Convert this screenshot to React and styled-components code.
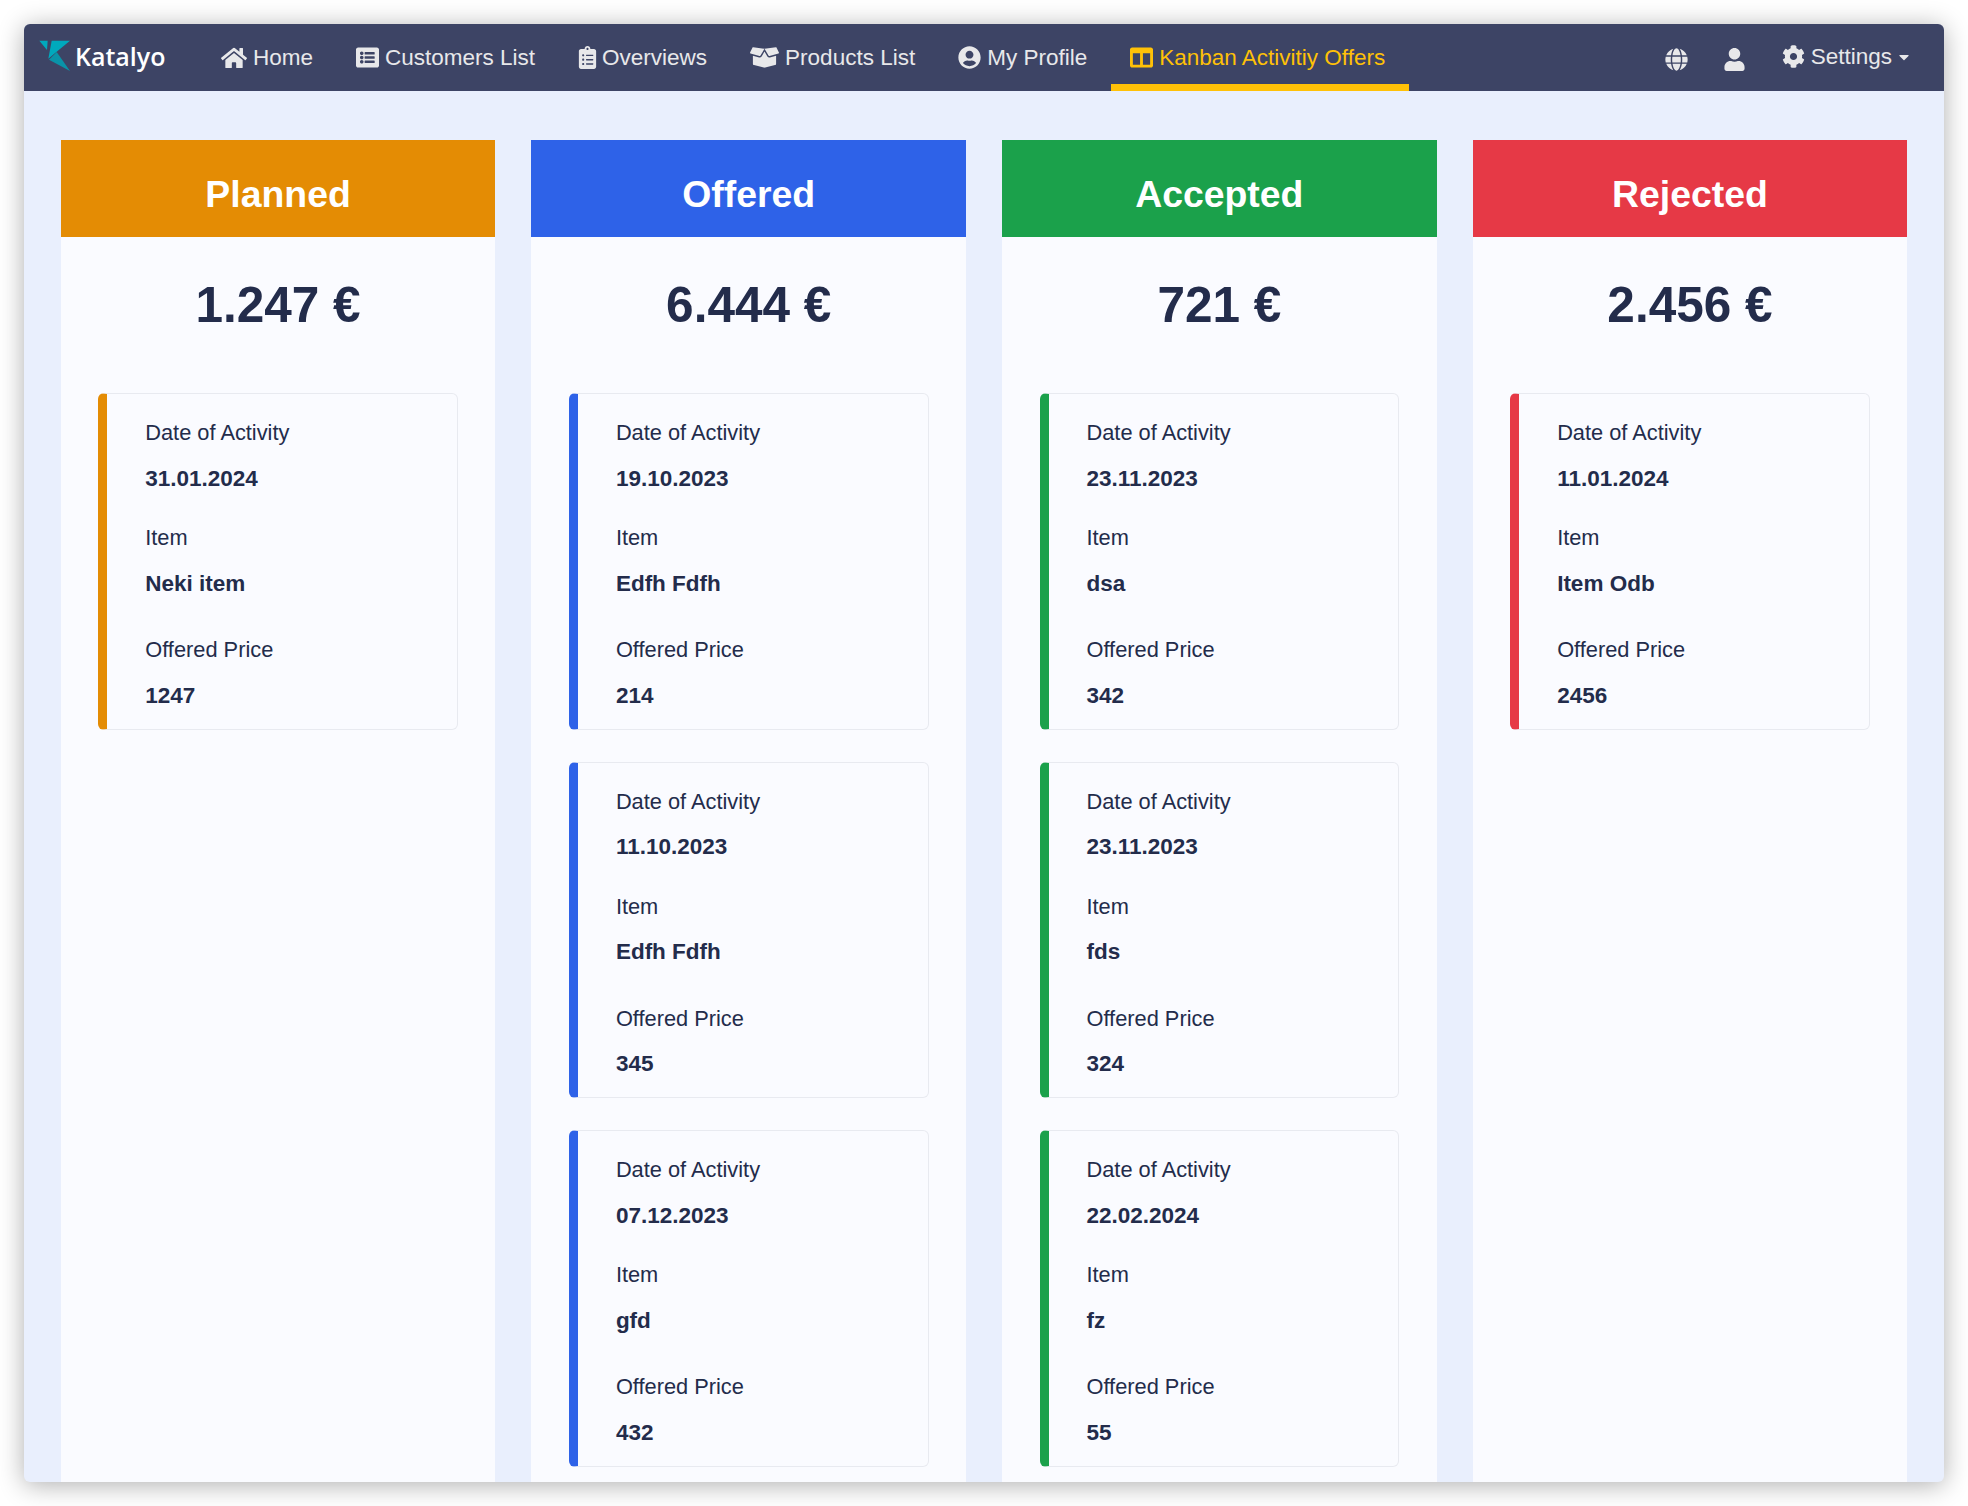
import React from 'react';
import styled, { createGlobalStyle } from 'styled-components';
import {
  FaHome, FaListAlt, FaClipboardList, FaBoxOpen, FaUserCircle,
  FaColumns, FaGlobe, FaUser, FaCog, FaCaretDown,
} from 'react-icons/fa';

const GlobalStyle = createGlobalStyle`
  html, body {
    margin: 0;
    padding: 0;
    background: #fff;
    font-family: "Liberation Sans", Arial, sans-serif;
  }
`;

const Page = styled.div`
  box-sizing: border-box;
  width: 1968px;
  height: 1506px;
  padding: 24px;
  overflow: hidden;
`;

const Window = styled.div`
  height: 1458px;
  display: flex;
  flex-direction: column;
  background: #e9effd;
  border-radius: 6px;
  overflow: hidden;
  box-shadow: 0 3px 26px rgba(0, 0, 0, 0.32);
`;

const Nav = styled.nav`
  flex: none;
  height: 67px;
  display: flex;
  align-items: stretch;
  background: #3d4465;
  color: #e8e8ea;
  font-size: 22.5px;
`;

const Brand = styled.div`
  width: 178px;
  display: flex;
  align-items: center;
  padding-left: 11px;
  padding-bottom: 4px;
  box-sizing: border-box;
  flex: none;
`;

const BrandName = styled.span`
  font-family: "Open Sans", sans-serif;
  font-weight: 600;
  font-size: 25px;
  color: #fff;
`;

const Menu = styled.ul`
  list-style: none;
  display: flex;
  margin: 0;
  padding: 0;
`;

const MenuItem = styled.li`
  display: flex;
  align-items: center;
  gap: 6px;
  padding: 7px 24px 0 19px;
  border-bottom: 7px solid ${(p) => (p.$active ? '#ffc107' : 'transparent')};
  box-sizing: border-box;
  color: ${(p) => (p.$active ? '#ffc107' : 'inherit')};
`;

const NavIcon = styled.span`
  display: flex;
  justify-content: center;
  width: ${(p) => p.$width}px;
  svg {
    flex: none;
  }
`;

const RightMenu = styled.div`
  margin-left: auto;
  display: flex;
  align-items: center;
  padding: 0 32px 0 0;
`;

const IconButton = styled.span`
  display: flex;
  margin-right: ${(p) => p.$space}px;
  padding-top: 4px;
  font-size: 23px;
`;

const Settings = styled.span`
  display: flex;
  align-items: center;
  gap: 6px;
  padding-bottom: 2px;
  svg {
    font-size: 23px;
  }
  svg:last-child {
    font-size: 16px;
    margin-left: -2px;
  }
`;

const Board = styled.main`
  flex: 1;
  min-height: 0;
  display: grid;
  grid-template-columns: repeat(4, 1fr);
  gap: 36px;
  padding: 49px 36.75px 0;
`;

const Column = styled.section`
  background: #fafbff;
  overflow: hidden;
  min-width: 0;
`;

const ColumnHeader = styled.h2`
  margin: 0;
  height: 97px;
  box-sizing: border-box;
  padding-top: 11px;
  display: flex;
  align-items: center;
  justify-content: center;
  background: ${(p) => p.$color};
  color: #fff;
  font-size: 37.4px;
  font-weight: 700;
`;

const Total = styled.div`
  height: 156px;
  display: flex;
  align-items: flex-start;
  justify-content: center;
  padding-top: 40px;
  box-sizing: border-box;
  color: #232c4b;
  font-size: 49.5px;
  font-weight: 700;
  line-height: 56px;
`;

const CardList = styled.div`
  display: flex;
  flex-direction: column;
  gap: 32px;
  padding: 0 37.5px;
`;

const Card = styled.article`
  box-sizing: border-box;
  height: 336.5px;
  padding: 26px 20px 0 38px;
  background: #fafbff;
  border: 1px solid #e8eaf0;
  border-left: 9px solid ${(p) => p.$color};
  border-radius: 6px;
  color: #232c4b;
`;

const Field = styled.div`
  margin-bottom: ${(p) => p.$after}px;
`;

const Label = styled.div`
  font-size: 21.8px;
  line-height: 25px;
  margin-bottom: 20.5px;
`;

const Value = styled.div`
  font-size: 22.5px;
  line-height: 25px;
  font-weight: 700;
`;

// size is the svg box, width the visible glyph, since the box is square
const navItems = [
  { icon: FaHome, label: 'Home', size: 26, width: 26 },
  { icon: FaListAlt, label: 'Customers List', size: 23, width: 23 },
  { icon: FaClipboardList, label: 'Overviews', size: 23, width: 18 },
  { icon: FaBoxOpen, label: 'Products List', size: 29, width: 29 },
  { icon: FaUserCircle, label: 'My Profile', size: 23, width: 23 },
  { icon: FaColumns, label: 'Kanban Activitiy Offers', size: 23, width: 23, active: true },
];

const columns = [
  {
    title: 'Planned', color: '#e48c04', total: '1.247 €',
    cards: [['31.01.2024', 'Neki item', '1247']],
  },
  {
    title: 'Offered', color: '#2e62e8', total: '6.444 €',
    cards: [
      ['19.10.2023', 'Edfh Fdfh', '214'],
      ['11.10.2023', 'Edfh Fdfh', '345'],
      ['07.12.2023', 'gfd', '432'],
    ],
  },
  {
    title: 'Accepted', color: '#1ba14b', total: '721 €',
    cards: [
      ['23.11.2023', 'dsa', '342'],
      ['23.11.2023', 'fds', '324'],
      ['22.02.2024', 'fz', '55'],
    ],
  },
  {
    title: 'Rejected', color: '#e63946', total: '2.456 €',
    cards: [['11.01.2024', 'Item Odb', '2456']],
  },
];

const Logo = () => (
  <svg width="40" height="40" viewBox="0 0 120 120">
    <path d="M13 14h25l-2 28z" fill="#00a9bd" />
    <path d="M50 14h55L65 47 40 68z" fill="#00a9bd" />
    <path d="M42 71l23-23 40 57z" fill="#0a93a8" />
  </svg>
);

const ActivityCard = ({ color, data }) => (
  <Card $color={color}>
    <Field $after={34.5}>
      <Label>Date of Activity</Label>
      <Value>{data[0]}</Value>
    </Field>
    <Field $after={41.5}>
      <Label>Item</Label>
      <Value>{data[1]}</Value>
    </Field>
    <Field $after={0}>
      <Label>Offered Price</Label>
      <Value>{data[2]}</Value>
    </Field>
  </Card>
);

export default function App() {
  return (
    <Page>
      <GlobalStyle />
      <Window>
        <Nav>
          <Brand>
            <Logo />
            <BrandName>Katalyo</BrandName>
          </Brand>
          <Menu>
            {navItems.map(({ icon: Icon, label, size, width, active }) => (
              <MenuItem key={label} $active={active}>
                <NavIcon $width={width}><Icon size={size} /></NavIcon>
                {label}
              </MenuItem>
            ))}
          </Menu>
          <RightMenu>
            <IconButton $space={35}><FaGlobe /></IconButton>
            <IconButton $space={36}><FaUser /></IconButton>
            <Settings>
              <FaCog />
              Settings
              <FaCaretDown />
            </Settings>
          </RightMenu>
        </Nav>
        <Board>
          {columns.map((col) => (
            <Column key={col.title}>
              <ColumnHeader $color={col.color}>{col.title}</ColumnHeader>
              <Total>{col.total}</Total>
              <CardList>
                {col.cards.map((data, i) => (
                  <ActivityCard key={i} color={col.color} data={data} />
                ))}
              </CardList>
            </Column>
          ))}
        </Board>
      </Window>
    </Page>
  );
}
